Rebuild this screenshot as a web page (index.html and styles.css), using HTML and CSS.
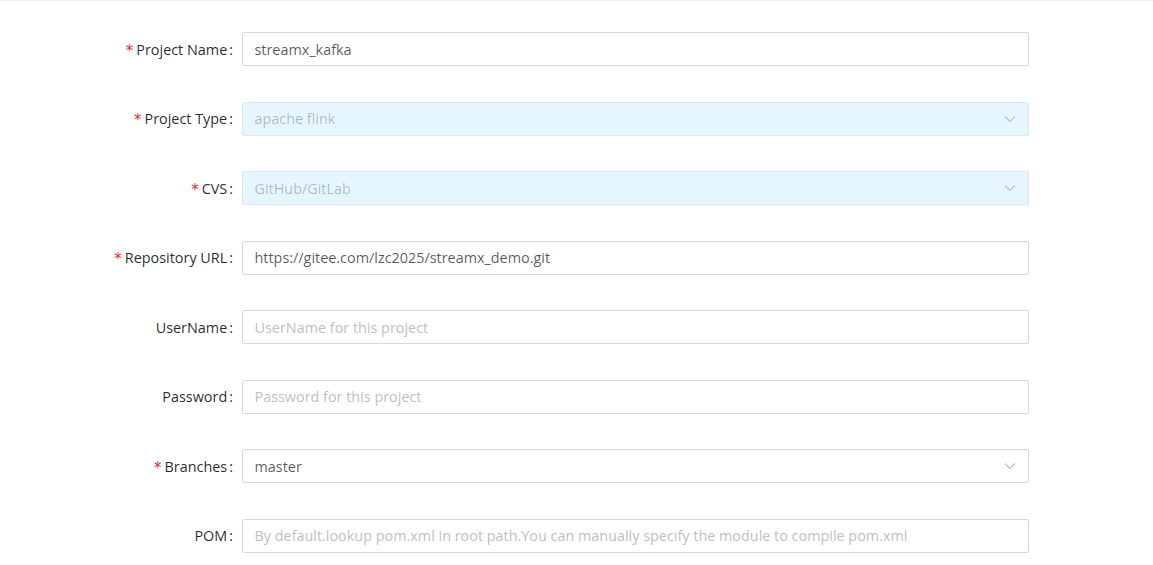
FILE: index.html
```
<!DOCTYPE html>
<html>
<head>
<meta charset="utf-8">
<link rel="stylesheet" href="styles.css">
</head>
<body>
<div class="page">
  <form class="form">
    <div class="row">
      <label class="label"><span class="req">*</span>Project Name<span class="colon">:</span></label>
      <div class="control"><div class="input"><span class="value">streamx_kafka</span></div></div>
    </div>
    <div class="row">
      <label class="label"><span class="req">*</span>Project Type<span class="colon">:</span></label>
      <div class="control"><div class="input select disabled"><span class="value dim">apache flink</span><svg class="arrow" viewBox="0 0 12 8" width="12" height="8"><path d="M1 1.5 L6 6.5 L11 1.5" fill="none" stroke="currentColor" stroke-width="1.1"/></svg></div></div>
    </div>
    <div class="row">
      <label class="label"><span class="req">*</span>CVS<span class="colon">:</span></label>
      <div class="control"><div class="input select disabled"><span class="value dim">GitHub/GitLab</span><svg class="arrow" viewBox="0 0 12 8" width="12" height="8"><path d="M1 1.5 L6 6.5 L11 1.5" fill="none" stroke="currentColor" stroke-width="1.1"/></svg></div></div>
    </div>
    <div class="row">
      <label class="label"><span class="req">*</span>Repository URL<span class="colon">:</span></label>
      <div class="control"><div class="input"><span class="value">https://gitee.com/lzc2025/streamx_demo.git</span></div></div>
    </div>
    <div class="row">
      <label class="label">UserName<span class="colon">:</span></label>
      <div class="control"><div class="input"><span class="value ph">UserName for this project</span></div></div>
    </div>
    <div class="row">
      <label class="label">Password<span class="colon">:</span></label>
      <div class="control"><div class="input"><span class="value ph">Password for this project</span></div></div>
    </div>
    <div class="row">
      <label class="label"><span class="req">*</span>Branches<span class="colon">:</span></label>
      <div class="control"><div class="input select"><span class="value">master</span><svg class="arrow" viewBox="0 0 12 8" width="12" height="8"><path d="M1 1.5 L6 6.5 L11 1.5" fill="none" stroke="currentColor" stroke-width="1.1"/></svg></div></div>
    </div>
    <div class="row">
      <label class="label">POM<span class="colon">:</span></label>
      <div class="control"><div class="input"><span class="value ph">By default.lookup pom.xml in root path.You can manually specify the module to compile pom.xml</span></div></div>
    </div>
  </form>
</div>
</body>
</html>
```
FILE: styles.css
```
html, body {
  margin: 0;
  padding: 0;
  background: #ffffff;
}
body {
  font-family: "Open Sans", "Noto Sans", "Liberation Sans", sans-serif;
  font-size: 14.4px;
}
.page {
  border-top: 1px solid #f0f0f2;
  padding-top: 31px;
  height: 533px;
}
.form {
  display: flex;
  flex-direction: column;
  gap: 35.5px;
}
.row {
  display: flex;
  align-items: center;
  height: 34px;
}
.label {
  width: 234px;
  display: flex;
  justify-content: flex-end;
  align-items: center;
  color: rgba(0, 0, 0, 0.85);
  white-space: nowrap;
}
.req {
  color: #f5222d;
  font-family: "DejaVu Sans", sans-serif;
  font-size: 15px;
  margin-right: 3px;
  line-height: 1;
  position: relative;
  top: 2px;
}
.colon {
  margin-left: 2px;
  margin-right: 1px;
}
.control {
  margin-left: 7.5px;
  width: 787px;
}
.input {
  box-sizing: border-box;
  height: 34px;
  border: 1px solid #d9d9d9;
  border-radius: 2px;
  background: #fff;
  display: flex;
  align-items: center;
  padding: 0 13px 0 12px;
}
.input.disabled {
  background: #e6f6fe;
  border-color: #d9e8f0;
}
.value {
  flex: 1;
  color: rgba(0, 0, 0, 0.66);
  white-space: nowrap;
}
.value.dim {
  color: rgba(0, 0, 0, 0.25);
}
.value.ph {
  color: #bfbfbf;
}
.arrow {
  color: #bfbfbf;
  margin-right: -1px;
}
```
